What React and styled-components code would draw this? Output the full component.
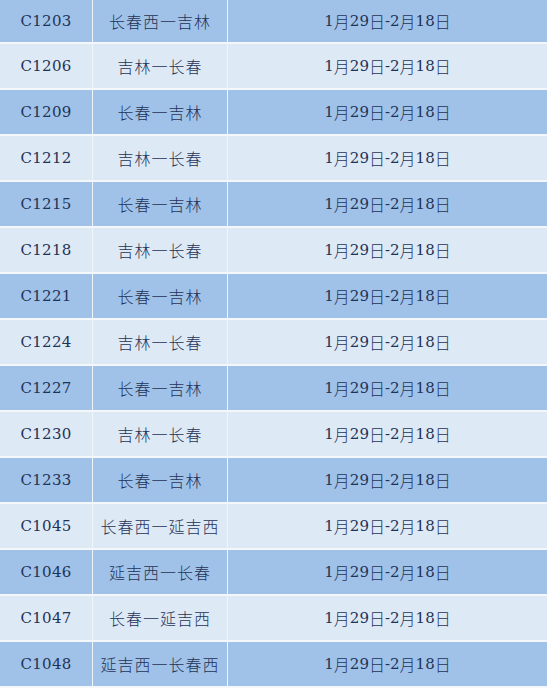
import React from "react";
import styled, { createGlobalStyle } from "styled-components";

const GlobalStyle = createGlobalStyle`
  html, body {
    margin: 0;
    padding: 0;
    background: #e9f1fa;
  }
`;

const rows = [
  ["C1203", "长春西一吉林"],
  ["C1206", "吉林一长春"],
  ["C1209", "长春一吉林"],
  ["C1212", "吉林一长春"],
  ["C1215", "长春一吉林"],
  ["C1218", "吉林一长春"],
  ["C1221", "长春一吉林"],
  ["C1224", "吉林一长春"],
  ["C1227", "长春一吉林"],
  ["C1230", "吉林一长春"],
  ["C1233", "长春一吉林"],
  ["C1045", "长春西一延吉西"],
  ["C1046", "延吉西一长春"],
  ["C1047", "长春一延吉西"],
  ["C1048", "延吉西一长春西"],
];

const Table = styled.div`
  width: 547px;
  height: 688px;
  overflow: hidden;
  display: flex;
  flex-direction: column;
  gap: 2px;
  background: #f4f8fd;
  color: #1f3356;
`;

const Row = styled.div`
  display: grid;
  grid-template-columns: 92px 134px 1fr;
  column-gap: 1px;
  height: ${(p) => p.h}px;
  flex-shrink: 0;
  background: #f0f5fb;
`;

const Cell = styled.div`
  display: flex;
  align-items: center;
  justify-content: center;
  background: ${(p) => (p.dark ? "#a0c2e9" : "#dee9f6")};
  font-family: "DejaVu Serif", "Liberation Serif", serif;
  font-size: 15px;
  letter-spacing: ${(p) => (p.wide ? "0.3px" : "0")};
`;

const Han = styled.span`
  font-family: "Noto Sans CJK SC", sans-serif;
  font-weight: 300;
  font-size: 16px;
  letter-spacing: ${(p) => (p.spaced ? "1px" : "0")};
`;

export default function App() {
  return (
    <>
      <GlobalStyle />
      <Table>
        {rows.map(([code, route], i) => {
          const dark = i % 2 === 0;
          return (
            <Row key={code} h={i === 0 ? 42 : 44}>
              <Cell dark={dark} wide>
                {code}
              </Cell>
              <Cell dark={dark}>
                <Han spaced>{route}</Han>
              </Cell>
              <Cell dark={dark}>
                1<Han>月</Han>29<Han>日</Han>-2<Han>月</Han>18<Han>日</Han>
              </Cell>
            </Row>
          );
        })}
      </Table>
    </>
  );
}
